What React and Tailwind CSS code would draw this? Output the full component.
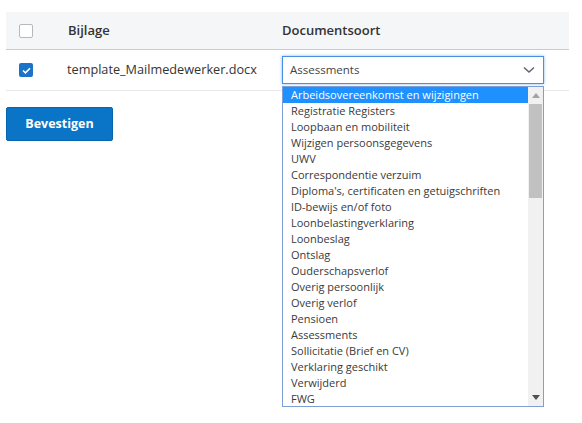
import React from "react";

const options = [
  "Arbeidsovereenkomst en wijzigingen",
  "Registratie Registers",
  "Loopbaan en mobiliteit",
  "Wijzigen persoonsgegevens",
  "UWV",
  "Correspondentie verzuim",
  "Diploma's, certificaten en getuigschriften",
  "ID-bewijs en/of foto",
  "Loonbelastingverklaring",
  "Loonbeslag",
  "Ontslag",
  "Ouderschapsverlof",
  "Overig persoonlijk",
  "Overig verlof",
  "Pensioen",
  "Assessments",
  "Sollicitatie (Brief en CV)",
  "Verklaring geschikt",
  "Verwijderd",
  "FWG",
];

const App = () => {
  return (
    <div
      className="w-[582px] h-[423px] bg-white px-[6px] pt-[12px] text-[#333]"
      style={{ fontFamily: '"Open Sans", sans-serif' }}
    >
      {/* table */}
      <div className="w-[563px]">
        {/* header */}
        <div className="flex items-center h-[38px] bg-[#f5f6f8] border-b border-[#c8ccd2]">
          <div className="w-[62px] pl-[13px]">
            <div className="w-[14px] h-[14px] border border-[#b5b9bf] rounded-[2px] bg-white"></div>
          </div>
          <div className="w-[214px] text-[13px] font-semibold">Bijlage</div>
          <div className="text-[13px] font-semibold">Documentsoort</div>
        </div>

        {/* row */}
        <div className="flex items-center h-[41px] border-b border-[#e6e8eb]">
          <div className="w-[61px] pl-[13px]">
            <div className="w-[14px] h-[14px] rounded-[2px] bg-[#1a73c8] flex items-center justify-center">
              <svg width="9" height="7" viewBox="0 0 9 7">
                <path d="M1 3.5 L3.4 5.8 L8 1.2" stroke="white" strokeWidth="1.6" fill="none" />
              </svg>
            </div>
          </div>
          <div className="w-[215px] text-[12.7px]">template_Mailmedewerker.docx</div>
          <div className="relative">
            <div className="w-[262px] h-[28px] border border-[#4a90e2] shadow-[0_0_3px_#8bb8ee] bg-white flex items-center justify-between pl-[7px] pr-[8px] text-[11.5px] text-[#444]">
              <span>Assessments</span>
              <svg width="12" height="8" viewBox="0 0 12 8">
                <path d="M1 1.5 L6 6 L11 1.5" stroke="#5a6470" strokeWidth="1.4" fill="none" />
              </svg>
            </div>

            {/* open list */}
            <div className="absolute left-0 top-[30px] w-[262px] h-[321px] border border-[#7e9ed8] bg-white flex z-10">
              <div className="flex-1">
                {options.map((o, i) => (
                  <div
                    key={i}
                    className={`h-[16px] leading-[16px] pl-[8px] text-[11px] whitespace-nowrap ${
                      i === 0 ? "bg-[#1e90ff] text-white" : "text-[#3a3a3a]"
                    }`}
                  >
                    {o}
                  </div>
                ))}
              </div>
              <div className="w-[15px] bg-[#f1f1f1] flex flex-col items-center">
                <div className="h-[17px] flex items-center justify-center">
                  <svg width="8" height="5" viewBox="0 0 8 5">
                    <path d="M0 5 L4 0 L8 5 Z" fill="#a3a3a3" />
                  </svg>
                </div>
                <div className="w-[13px] h-[94px] bg-[#c1c1c1]"></div>
                <div className="flex-1"></div>
                <div className="h-[17px] flex items-center justify-center">
                  <svg width="8" height="5" viewBox="0 0 8 5">
                    <path d="M0 0 L8 0 L4 5 Z" fill="#505050" />
                  </svg>
                </div>
              </div>
            </div>
          </div>
        </div>
      </div>

      <button className="mt-[16px] w-[107px] h-[34px] bg-[#0a74c6] rounded-[2px] text-white font-bold text-[12.5px] border border-[#0864ad]">
        Bevestigen
      </button>
    </div>
  );
};

export default App;
